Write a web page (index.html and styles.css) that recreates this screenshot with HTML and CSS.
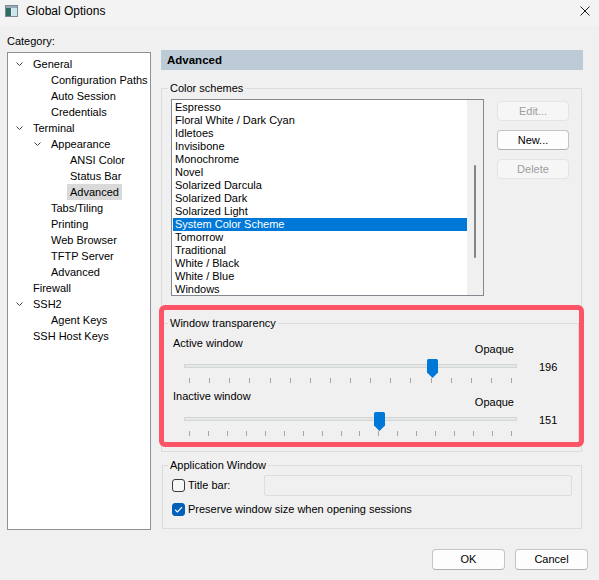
FILE: index.html
```html
<!DOCTYPE html>
<html>
<head>
<meta charset="utf-8">
<title>Global Options</title>
<link rel="stylesheet" href="styles.css">
</head>
<body>
<div class="titlebar">
  <svg class="app-icon" viewBox="0 0 13 12" width="13" height="12">
    <rect x="0.5" y="0.5" width="12" height="11" fill="#e4ecf1" stroke="#7d8894"/>
    <rect x="1" y="1" width="11" height="2" fill="#9aaaba"/>
    <rect x="1" y="3" width="5" height="8" fill="#2f6d62"/>
    <rect x="7" y="3" width="5" height="8" fill="#cde6ee"/>
  </svg>
  <span class="title">Global Options</span>
  <svg class="close" viewBox="0 0 10 10" width="10" height="10">
    <path d="M0.5 0.5 L9.5 9.5 M9.5 0.5 L0.5 9.5" stroke="#1a1a1a" stroke-width="1" fill="none"/>
  </svg>
</div>

<div class="main">
  <div class="left">
    <div class="cat-label">Category:</div>
    <div class="tree">
      <div class="node l0"><span class="twisty"><svg viewBox="0 0 7 4" width="7" height="4"><polyline points="0.5,0.5 3.5,3.5 6.5,0.5" fill="none" stroke="#404040"/></svg></span><span>General</span></div>
      <div class="node l1"><span class="twisty"></span><span>Configuration Paths</span></div>
      <div class="node l1"><span class="twisty"></span><span>Auto Session</span></div>
      <div class="node l1"><span class="twisty"></span><span>Credentials</span></div>
      <div class="node l0"><span class="twisty"><svg viewBox="0 0 7 4" width="7" height="4"><polyline points="0.5,0.5 3.5,3.5 6.5,0.5" fill="none" stroke="#404040"/></svg></span><span>Terminal</span></div>
      <div class="node l1"><span class="twisty"><svg viewBox="0 0 7 4" width="7" height="4"><polyline points="0.5,0.5 3.5,3.5 6.5,0.5" fill="none" stroke="#404040"/></svg></span><span>Appearance</span></div>
      <div class="node l2"><span class="twisty"></span><span>ANSI Color</span></div>
      <div class="node l2"><span class="twisty"></span><span>Status Bar</span></div>
      <div class="node l2"><span class="twisty"></span><span class="sel">Advanced</span></div>
      <div class="node l1"><span class="twisty"></span><span>Tabs/Tiling</span></div>
      <div class="node l1"><span class="twisty"></span><span>Printing</span></div>
      <div class="node l1"><span class="twisty"></span><span>Web Browser</span></div>
      <div class="node l1"><span class="twisty"></span><span>TFTP Server</span></div>
      <div class="node l1"><span class="twisty"></span><span>Advanced</span></div>
      <div class="node l0"><span class="twisty"></span><span>Firewall</span></div>
      <div class="node l0"><span class="twisty"><svg viewBox="0 0 7 4" width="7" height="4"><polyline points="0.5,0.5 3.5,3.5 6.5,0.5" fill="none" stroke="#404040"/></svg></span><span>SSH2</span></div>
      <div class="node l1"><span class="twisty"></span><span>Agent Keys</span></div>
      <div class="node l0"><span class="twisty"></span><span>SSH Host Keys</span></div>
    </div>
  </div>

  <div class="right">
    <div class="section-head">Advanced</div>

    <fieldset class="group cs">
      <legend>Color schemes</legend>
      <div class="cs-row">
        <div class="listbox">
          <div class="items">
            <div class="item">Espresso</div>
            <div class="item">Floral White / Dark Cyan</div>
            <div class="item">Idletoes</div>
            <div class="item">Invisibone</div>
            <div class="item">Monochrome</div>
            <div class="item">Novel</div>
            <div class="item">Solarized Darcula</div>
            <div class="item">Solarized Dark</div>
            <div class="item">Solarized Light</div>
            <div class="item sel">System Color Scheme</div>
            <div class="item">Tomorrow</div>
            <div class="item">Traditional</div>
            <div class="item">White / Black</div>
            <div class="item">White / Blue</div>
            <div class="item">Windows</div>
          </div>
          <div class="scroll"><div class="scroll-thumb"></div></div>
        </div>
        <div class="cs-buttons">
          <div class="btn disabled">Edit...</div>
          <div class="btn">New...</div>
          <div class="btn disabled">Delete</div>
        </div>
      </div>

      <fieldset class="group tr">
        <legend>Window transparency</legend>
        <div class="tr-body">
          <div class="tb">
            <div class="tb-label">Active window</div>
            <div class="tb-opaque">Opaque</div>
            <div class="track">
              <svg class="thumb thumb-active" viewBox="0 0 11 19" width="11" height="19"><path d="M1.5 0 H9.5 Q11 0 11 1.5 V13.5 L5.5 19 L0 13.5 V1.5 Q0 0 1.5 0 Z" fill="#0078d7"/></svg>
            </div>
            <div class="tb-val">196</div>
            <div class="ticks">
              <i></i><i></i><i></i><i></i><i></i><i></i><i></i><i></i><i></i><i></i><i></i><i></i><i></i><i></i><i></i><i></i><i></i>
            </div>
          </div>
          <div class="tb">
            <div class="tb-label">Inactive window</div>
            <div class="tb-opaque">Opaque</div>
            <div class="track">
              <svg class="thumb thumb-inactive" viewBox="0 0 11 19" width="11" height="19"><path d="M1.5 0 H9.5 Q11 0 11 1.5 V13.5 L5.5 19 L0 13.5 V1.5 Q0 0 1.5 0 Z" fill="#0078d7"/></svg>
            </div>
            <div class="tb-val">151</div>
            <div class="ticks">
              <i></i><i></i><i></i><i></i><i></i><i></i><i></i><i></i><i></i><i></i><i></i><i></i><i></i><i></i><i></i><i></i><i></i><i></i>
            </div>
          </div>
        </div>
      </fieldset>
    </fieldset>

    <fieldset class="group aw">
      <legend>Application Window</legend>
      <div class="aw-body">
        <div class="aw-row">
          <div class="check"><span class="box"></span><span>Title bar:</span></div>
          <div class="textbox"></div>
        </div>
        <div class="aw-row">
          <div class="check wide"><span class="box on"><svg viewBox="0 0 9 7" width="9" height="7"><polyline points="1,3.6 3.4,6 8,1.2" fill="none" stroke="#fff" stroke-width="1.2"/></svg></span><span>Preserve window size when opening sessions</span></div>
        </div>
      </div>
    </fieldset>
  </div>
</div>

<div class="footer">
  <div class="btn fbtn">OK</div>
  <div class="btn fbtn">Cancel</div>
</div>

<div class="highlight"></div>
</body>
</html>
```

FILE: styles.css
```css
* { box-sizing: border-box; }
html, body { margin: 0; padding: 0; }
body {
  width: 599px;
  height: 580px;
  overflow: hidden;
  position: relative;
  background: #f0f0f0;
  font-family: "Liberation Sans", Arial, sans-serif;
  font-size: 11px;
  line-height: 13px;
  color: #000;
}

/* title bar */
.titlebar {
  height: 26px;
  background: #f3f3f3;
  display: flex;
  align-items: center;
  padding: 0 9px 4px 5px;
}
.app-icon { display: block; flex: none; }
.title { margin-left: 8px; font-size: 12px; line-height: 14px; }
.close { display: block; margin-left: auto; }

/* main layout */
.main {
  display: grid;
  grid-template-columns: 144px 422px;
  column-gap: 10px;
  padding-left: 7px;
}
.left { padding-top: 7px; }
.cat-label { height: 16px; line-height: 16px; }
.tree {
  margin-top: 3px;
  height: 478px;
  background: #fff;
  border: 1px solid #8d9096;
  padding-top: 3px;
}
.node {
  display: flex;
  align-items: center;
  height: 16px;
  line-height: 16px;
  white-space: nowrap;
}
.l0 { padding-left: 8px; }
.l1 { padding-left: 26px; }
.l2 { padding-left: 45px; }
.twisty { width: 17px; flex: none; display: flex; align-items: center; }
.twisty svg { display: block; }
.node .sel { background: #d9d9d9; padding: 0 3px; margin-left: -3px; }

.right { padding-top: 24px; }
.section-head {
  height: 20px;
  line-height: 20px;
  background: #bdcbd9;
  font-weight: bold;
  font-size: 11.5px;
  padding-left: 6px;
}

/* group boxes */
fieldset.group {
  margin: 0;
  padding: 0;
  border: 1px solid #dcdcdc;
  min-width: 0;
}
fieldset.group > legend {
  padding: 0 2px;
  line-height: 14px;
}

fieldset.cs { margin-top: 11px; width: 421px; padding-bottom: 7px; }
fieldset.cs > legend { margin-left: 6px; }
.cs-row {
  display: flex;
  align-items: flex-start;
  padding-left: 9px;
  margin-top: 4px;
}
.listbox {
  width: 313px;
  height: 197px;
  border: 1px solid #84878e;
  background: #fff;
  display: flex;
  padding: 1px 0 0 1px;
}
.items { flex: 1; }
.item { height: 13px; line-height: 13px; padding-left: 2px; white-space: nowrap; }
.item.sel { background: #0078d7; color: #fff; }
.scroll {
  width: 16px;
  flex: none;
  margin-top: -1px;
  background: #f0f0f0;
  display: flex;
  justify-content: center;
}
.scroll-thumb {
  width: 2px;
  height: 93px;
  margin-top: 65px;
  background: #858585;
  border-radius: 1px;
}
.cs-buttons {
  margin-left: 13px;
  margin-top: 2px;
  width: 72px;
  display: flex;
  flex-direction: column;
  gap: 9px;
}
.btn {
  height: 20px;
  line-height: 18px;
  text-align: center;
  border: 1px solid #c4c4c4;
  border-bottom-color: #b0b0b0;
  border-radius: 4px;
  background: #fdfdfd;
}
.btn.disabled {
  color: #9d9d9d;
  border-color: #e4e4e4;
  background: #f6f6f6;
}

/* transparency */
fieldset.tr { margin: 20px 0 0 1px; width: 416px; }
fieldset.tr > legend { margin-left: 4px; }
.tr-body { padding: 7px 0 7px 9px; }
.tb {
  display: grid;
  grid-template-columns: 344px 40px;
  column-gap: 22px;
  grid-template-rows: 19px 8px 4px 10px 5px;
}
.tb + .tb { margin-top: 7px; }
.tb-label { grid-row: 1; grid-column: 1; justify-self: start; align-self: start; }
.tb-opaque { grid-row: 1; grid-column: 1; justify-self: end; align-self: end; margin-right: 3px; }
.track {
  grid-row: 3;
  grid-column: 1;
  margin-left: 11px;
  height: 4px;
  background: #e6e8e8;
  border: 1px solid #d3d6d6;
  position: relative;
}
.thumb { position: absolute; top: -6px; display: block; }
.thumb-active { left: 242px; }
.thumb-inactive { left: 189px; }
.tb-val {
  grid-row: 3;
  grid-column: 2;
  align-self: start;
  line-height: 6px;
  height: 6px;
}
.ticks {
  grid-row: 5;
  grid-column: 1;
  margin: 0 5px 0 16px;
  display: flex;
  justify-content: space-between;
}
.ticks i { display: block; width: 1px; height: 5px; background: #a6a6a6; }

/* application window */
fieldset.aw { margin: 6px 0 0 1px; width: 420px; }
fieldset.aw > legend { margin-left: 5px; }
.aw-body { padding: 3px 9px 8px 9px; }
.aw-row {
  display: grid;
  grid-template-columns: 92px 1fr;
  height: 21px;
  align-items: center;
}
.aw-row + .aw-row { margin-top: 3px; }
.check { display: flex; align-items: center; gap: 3px; white-space: nowrap; }
.check.wide { grid-column: 1 / -1; }
.box {
  width: 13px;
  height: 13px;
  flex: none;
  border: 1px solid #3a3a3a;
  border-radius: 3px;
  background: #f7f7f7;
}
.box.on {
  background: #005fb8;
  border-color: #005fb8;
  display: flex;
  align-items: center;
  justify-content: center;
}
.box.on svg { display: block; }
.textbox {
  height: 21px;
  border: 1px solid #dddddd;
  border-radius: 2px;
  background: #f0f0f0;
}

/* footer */
.footer {
  display: flex;
  justify-content: flex-end;
  gap: 10px;
  padding-right: 11px;
  margin-top: 19px;
}
.fbtn { width: 73px; height: 21px; line-height: 19px; }

/* annotation overlay */
.highlight {
  position: absolute;
  left: 159px;
  top: 305px;
  width: 425px;
  height: 142px;
  border: 5px solid #fe5467;
  border-radius: 6px;
  pointer-events: none;
}
```
